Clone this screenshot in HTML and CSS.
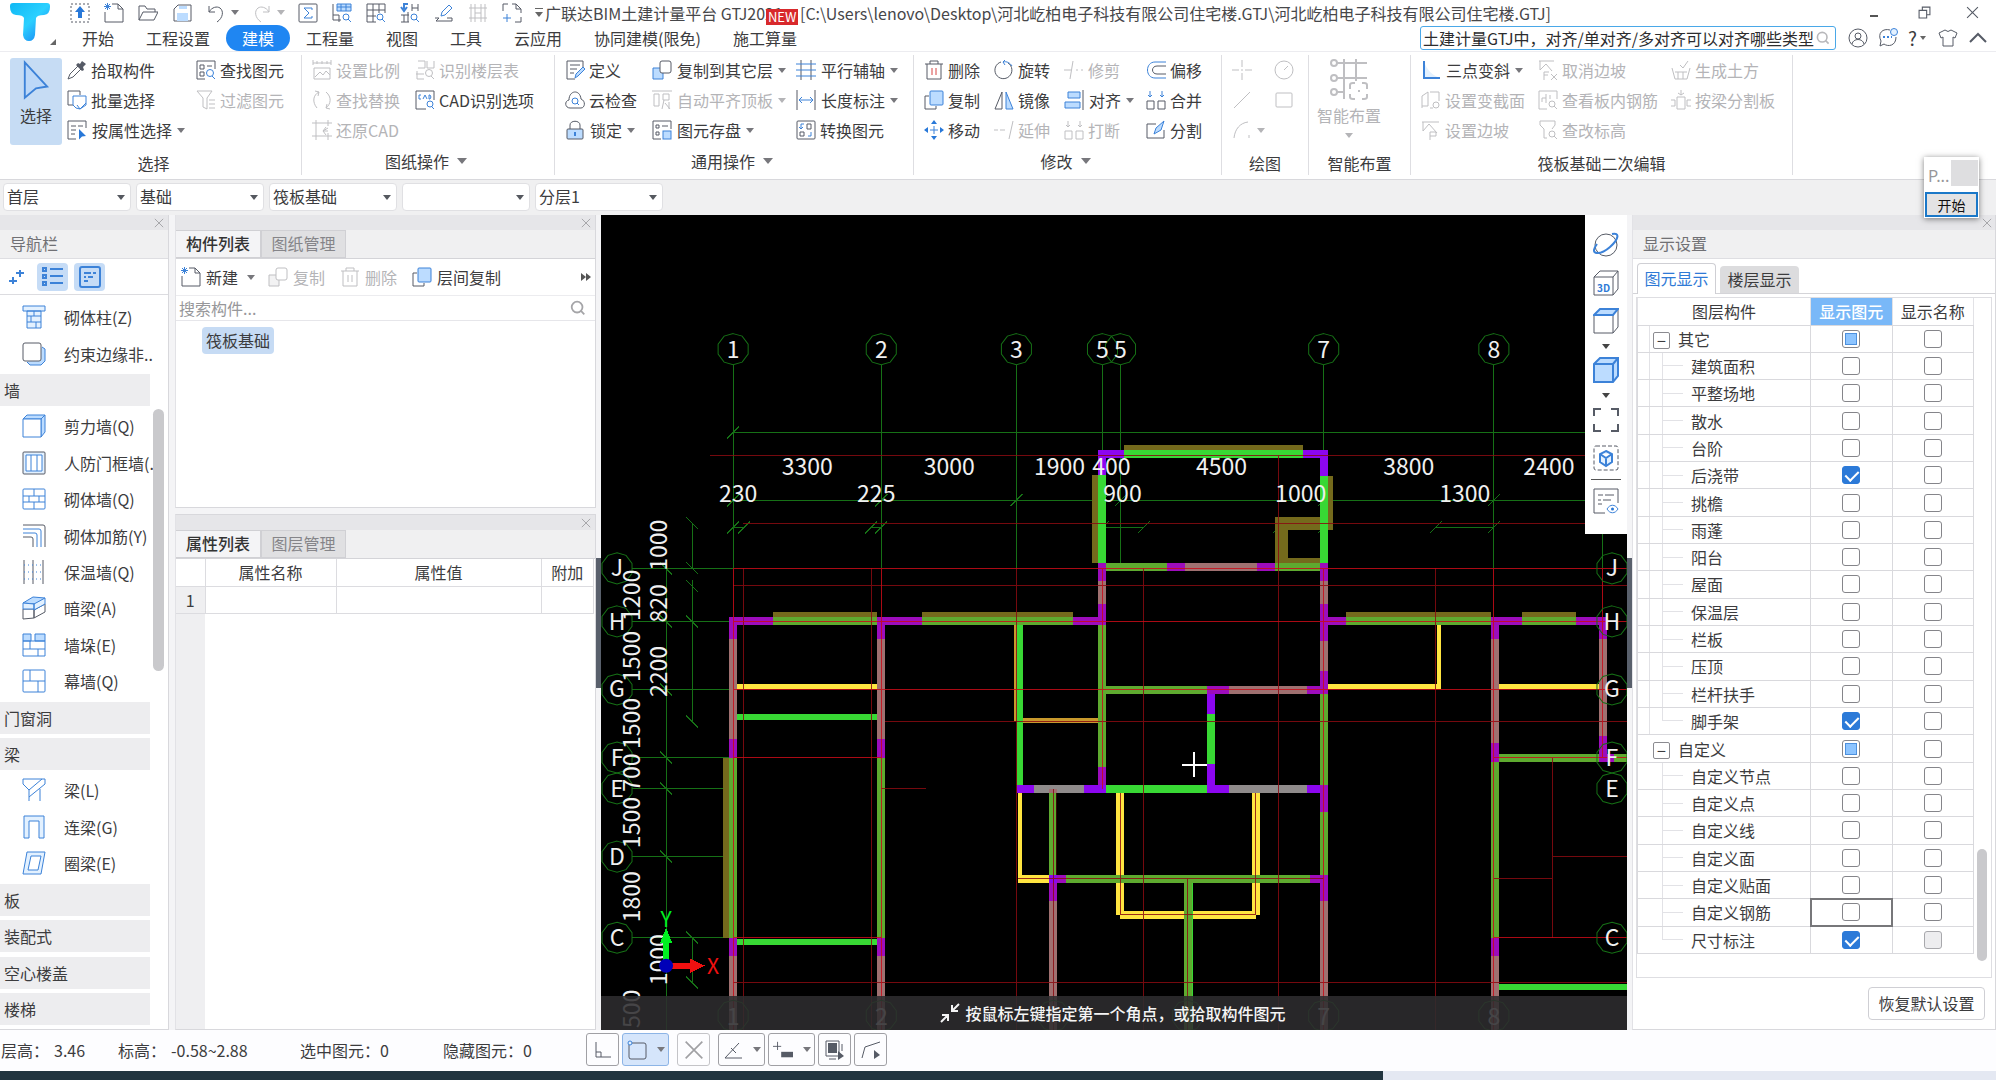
FILE: index.html
```html
<!DOCTYPE html>
<html lang="zh-CN">
<head>
<meta charset="utf-8">
<title>广联达BIM土建计量平台 GTJ2021</title>
<link rel="stylesheet" href="styles.css">
</head>
<body>
<svg class="defs" aria-hidden="true">
<defs>
<linearGradient id="logo" x1="0" y1="0" x2="1" y2="1"><stop offset="0" stop-color="#10b8f4"/><stop offset=".5" stop-color="#2bd0ff"/><stop offset="1" stop-color="#1673f0"/></linearGradient>
<symbol id="upbox" viewBox="0 0 20 20"><rect class="k" x="1" y="1" width="18" height="18" stroke-dasharray="2 2"/><path class="s" d="M10 3l5 6h-3v6H8V9H5z"/></symbol>
<symbol id="new" viewBox="0 0 20 20"><path class="k" d="M8 1h6l5 5v13H1V9M14 1v5h5"/><path class="a" d="M1 1l5 5M6 1L1 6M3.500 0v7M0 3.500h7"/></symbol>
<symbol id="open" viewBox="0 0 20 20"><path class="k" d="M1 17V3h6l2 3h8v3M1 17L5 9h15l-4 8z"/></symbol>
<symbol id="save" viewBox="0 0 20 20"><path class="k" d="M2 6l4-4h13v16H2z"/><path class="af" d="M5 10h11v8H5zM7 3h8v3H7z"/></symbol>
<symbol id="undo" viewBox="0 0 20 20"><path class="k" d="M3 3v6h6M3 9c3-5 8-6 11-4 4 3 3 10-3 14"/></symbol>
<symbol id="redo" viewBox="0 0 20 20"><path class="k" d="M17 3v6h-6M17 9C14 4 9 3 6 5c-4 3-3 10 3 14"/></symbol>
<symbol id="sum" viewBox="0 0 20 20"><rect class="k" x="1" y="1" width="18" height="18" rx="1"/><path class="a" d="M14 7V5H6l5 5-5 5h8v-2"/></symbol>
<symbol id="gridfind" viewBox="0 0 20 20"><path class="k" d="M1 1h18v9M1 1v18h9M1 7h18M1 13h9M7 1v18M13 1v9"/><circle class="a" cx="14" cy="14" r="3"/><path class="a" d="M16 16l3 3"/></symbol>
<symbol id="tablefind" viewBox="0 0 20 20"><path class="k" d="M1 1v16h8M1 12h6v7"/><path class="af" d="M5 1h14v7H5z"/><path class="a" d="M5 1h14v7H5zM5 4h14M9 1v7M14 1v7"/><circle class="a" cx="14" cy="14" r="3"/><path class="a" d="M16 16l3 3"/></symbol>
<symbol id="swapfind" viewBox="0 0 20 20"><path class="a" stroke-width="2" d="M8 1H4v5M1 4l3 4 3-4"/><path class="k" d="M12 1v7M18 1v7M12 5h6M1 12h8M4 12v7M1 19h8M8 9v10"/><circle class="a" cx="14" cy="14" r="3"/><path class="a" d="M16 16l3 3"/></symbol>
<symbol id="pen" viewBox="0 0 20 20"><path class="a" d="M7 13l1-4 7-7 3 3-7 7z"/><path class="k" d="M1 15h4l-3 3h16v-3h-5"/></symbol>
<symbol id="fence" viewBox="0 0 20 20"><path class="k" d="M3 1v18M7 1v18M13 1v18M17 1v18M1 5h18M1 15h18M7 10h6"/></symbol>
<symbol id="addpage" viewBox="0 0 20 20"><path class="k" d="M1 8V1h5M10 1h4l5 5v4M19 14v5h-6M14 1v5h5"/><path class="a" d="M5 11v8M1 15h8"/></symbol>
<symbol id="cursor" viewBox="0 0 30 44"><path class="af a" stroke-width="2" d="M3 3l24 26-12 2-12 10z"/></symbol>
<symbol id="dropper" viewBox="0 0 20 20"><path class="kf" d="M11 3l2 1 2-3 4 3-3 3 1 3-2 1-6-6z"/><path class="k" d="M11 6l-8 8-2 5 5-2 8-8"/></symbol>
<symbol id="batch" viewBox="0 0 20 20"><path class="k" d="M6 15H1V1h12v4"/><path class="a w" d="M6 6h13v9l-6 4-4-1-3-3z"/><path class="a" d="M10 15l3 4 6-6"/></symbol>
<symbol id="prop" viewBox="0 0 20 20"><path class="k" d="M9 19H1V1h18v7M4 6h5M11 6h5M4 10h5M4 14h4"/><path class="s" d="M12 9l7 7-4 .5-3 3z"/></symbol>
<symbol id="find" viewBox="0 0 20 20"><path class="k" d="M9 19H1V1h18v8M4 5h4v4H4zM4 12h4v4H4zM11 6h5"/><circle class="a" cx="14" cy="13" r="3.500"/><path class="a" d="M16 16l3 3"/></symbol>
<symbol id="filter" viewBox="0 0 20 20"><path class="k" d="M1 1h15l-5 7v11l-4-2V8zM13 10h6M13 14h6M13 18h6"/></symbol>
<symbol id="level" viewBox="0 0 20 20"><path class="k" d="M9 18H6V9L2 5V1h15v4l-3 4"/><circle class="k" cx="14" cy="14" r="3"/><path class="k" d="M16 16l3 3"/></symbol>
<symbol id="slab" viewBox="0 0 20 20"><path class="k" d="M9 19H1V1h18v8M8 4v9M4 8h4M4 8v4M12 5v4"/><circle class="k" cx="14" cy="14" r="3"/><path class="k" d="M16 16l3 3"/></symbol>
<symbol id="scale" viewBox="0 0 20 20"><path class="k" d="M1 0v5M5 1v3M10 1v3M15 1v3M19 0v5M1 3h18M2 8h16v11H2zM3 17l5-5 3 3 3-4 4 4"/></symbol>
<symbol id="floors" viewBox="0 0 20 20"><path class="k" d="M3 1h7v7H3M12 1v7h7V1M2 11v8h7M1 14h8"/><circle class="a" cx="14" cy="13" r="3.500"/><path class="a" d="M16 16l3 3"/></symbol>
<symbol id="cycle" viewBox="0 0 20 20"><path class="k" d="M5 18C0 12 1 5 7 2M7 2L3 1M7 2L6 6M14 2c6 5 5 12 0 16M14 18l4 1M14 18l1-4"/></symbol>
<symbol id="cad" viewBox="0 0 20 20"><path class="k" d="M11 19H1V1h18v9"/><path class="a" d="M6 5H4v4h2M8 9l2-4 2 4M14 5v4h1l1-2-1-2z"/><circle class="a" cx="15" cy="14" r="3"/><path class="a" d="M17 17l2 2"/></symbol>
<symbol id="restore" viewBox="0 0 20 20"><path class="k" d="M4 0v20M0 3h20M0 16h20M16 0v6M16 13v7M16 8l-5 3h5M11 11l3-4M11 11l3 4"/></symbol>
<symbol id="define" viewBox="0 0 20 20"><path class="k" d="M10 19H2V1h16v6M5 5h10M5 9h7M5 13h4"/><path class="a af" d="M10 18l1-4 7-7 2 2-7 7z"/></symbol>
<symbol id="cloud" viewBox="0 0 20 20"><path class="k" d="M5 18C0 18-1 11 4 10 4 0 15-1 16 9c5 2 4 9 0 9z"/><circle class="a" cx="10" cy="11" r="3"/><path class="a" d="M12 13l2 2"/></symbol>
<symbol id="lock" viewBox="0 0 20 20"><path class="k" d="M5 9V5c0-5 10-5 10 0v4"/><rect class="k af" x="2" y="9" width="16" height="10" rx="1"/><path class="a" stroke-width="2" d="M10 12v4"/></symbol>
<symbol id="copyto" viewBox="0 0 20 20"><path class="a af" d="M1 8h10v11H1z"/><rect class="k w" x="8" y="1" width="11" height="12" rx="2"/></symbol>
<symbol id="aligntop" viewBox="0 0 20 20"><path class="k" d="M0 1h20M2 4v12h5V4zM11 4h6v6h-6zM12 10l-2 9M13 13l5 6M17 12v7"/></symbol>
<symbol id="store" viewBox="0 0 20 20"><path class="k" d="M9 19H1V1h18v8M4 5h3v3H4zM10 6h6M4 12h3v3H4z"/><rect class="a af" x="11" y="11" width="8" height="8"/></symbol>
<symbol id="axes" viewBox="0 0 20 20"><path class="k" d="M5 0v20M15 0v20"/><path class="a" d="M0 4h20M0 10h20M0 16h20"/></symbol>
<symbol id="length" viewBox="0 0 20 20"><path class="k" d="M1 0v20M19 0v20"/><path class="a" d="M3 10h14M6 7l-3 3 3 3M14 7l3 3-3 3"/></symbol>
<symbol id="convert" viewBox="0 0 20 20"><rect class="k" x="1" y="1" width="18" height="18" rx="1"/><path class="k" d="M11 4h4v5h-4zM4 12h4v4H4z"/><path class="a" d="M8 4H5v5M12 16h3v-4M3 7l2 2 2-2"/></symbol>
<symbol id="trash" viewBox="0 0 20 20"><path class="k" d="M1 4h18M6 4V1h8v3M3 4v15h14V4"/><path class="r" d="M8 8v7M12 8v7"/></symbol>
<symbol id="rotate" viewBox="0 0 20 20"><path class="k" d="M14 3A8.500 8.500 0 1 1 7 2"/><path class="a" d="M9 2c4-1 7 1 9 4M11 0L9 2l2 3"/></symbol>
<symbol id="trim" viewBox="0 0 20 20"><path class="k" d="M0 10h7M9 1L6 19M12 10h2M17 10h2"/></symbol>
<symbol id="offset" viewBox="0 0 20 20"><path class="a" d="M20 2H9C-1 2-1 18 9 18h11"/><path class="k" d="M20 6h-9c-6 0-6 8 0 8h9"/></symbol>
<symbol id="copy" viewBox="0 0 20 20"><path class="k" d="M5 6H1v13h11v-3"/><rect class="a af" x="6" y="1" width="13" height="14" rx="1"/></symbol>
<symbol id="mirror" viewBox="0 0 20 20"><path class="k" d="M8 2v17H1z"/><path class="a af" d="M12 2v17h7z"/></symbol>
<symbol id="align" viewBox="0 0 20 20"><path class="k" d="M19 0v20"/><path class="a af" d="M4 2h12v6H4zM1 12h15v6H1z"/></symbol>
<symbol id="merge" viewBox="0 0 20 20"><path class="a" d="M4 1v6M2 5l2 2 2-2M16 1v6M14 5l2 2 2-2"/><path class="k" d="M1 11h7v8H1zM12 11h7v8h-7z"/></symbol>
<symbol id="move" viewBox="0 0 20 20"><path class="s" d="M10 0l3 4H7zM10 20l3-4H7zM0 10l4-3v6zM20 10l-4-3v6z"/><path class="a" d="M10 6v8M6 10h8"/></symbol>
<symbol id="extend" viewBox="0 0 20 20"><path class="k" d="M0 10h4M6 10h5M19 1l-4 18"/></symbol>
<symbol id="split" viewBox="0 0 20 20"><path class="k" d="M10 4H1v14h17v-8"/><path class="a af" d="M8 14l2-6 8-7-3 9z"/></symbol>
<symbol id="point" viewBox="0 0 20 20"><path class="k" d="M10 0v7M10 13v7M0 10h7M13 10h7M9 10h2"/></symbol>
<symbol id="circ" viewBox="0 0 20 20"><circle class="k" cx="10" cy="10" r="9"/><path class="k" d="M10 10l4-4"/></symbol>
<symbol id="line" viewBox="0 0 20 20"><path class="k" d="M2 18L18 2"/></symbol>
<symbol id="rect" viewBox="0 0 20 20"><rect class="k" x="2" y="3" width="16" height="14" rx="1"/></symbol>
<symbol id="arc" viewBox="0 0 20 20"><path class="k" d="M2 18C3 9 8 3 16 2M17 15v3"/></symbol>
<symbol id="smart" viewBox="0 0 40 42"><path class="k" stroke-width="2" d="M8 5h30M8 20h30M8 34h8M15 1v40M27 1v22M21 31v-4q0-2 3-2h2M33 25h2q3 0 3 2v4M38 36v3q0 2-3 2h-2M26 41h-2q-3 0-3-2v-3M30 32v2"/><circle class="k w" stroke-width="2" cx="5" cy="5" r="3"/><circle class="k w" stroke-width="2" cx="5" cy="20" r="3"/><circle class="k w" stroke-width="2" cx="5" cy="34" r="3"/></symbol>
<symbol id="slope" viewBox="0 0 20 20"><path class="af2" d="M3 2c4 9 8 13 16 16H3z"/><path class="a" stroke-width="2" d="M3 1v17h16"/></symbol>
<symbol id="section" viewBox="0 0 20 20"><path class="k" d="M1 18V6l6-4v14H1M9 2h9v9M9 18h3"/><circle class="k" cx="15" cy="15" r="3"/></symbol>
<symbol id="pit" viewBox="0 0 20 20"><path class="k" d="M1 2h17M2 2v9l6-7 8 9M9 12v8M9 12h6v4H9"/></symbol>
<symbol id="fx" viewBox="0 0 20 20"><path class="k" d="M1 1h15M2 1v9l6-6 6 7M6 12v8M6 12h5M6 15h4M13 14l6 6M19 14l-6 6"/></symbol>
<symbol id="excavate" viewBox="0 0 20 20"><path class="k" d="M1 8l3 11h12l3-11M4 12h12M7 12v7M12 12v7M9 5l3 3 5-7"/></symbol>
<symbol id="beamcut" viewBox="0 0 20 20"><path class="k" d="M6 7h8v12H6zM0 10h4v6H0M20 10h-4v6h4M10 0v5M7 3l3 2 3-2"/></symbol>
<symbol id="user" viewBox="0 0 20 20"><circle class="k" cx="10" cy="10" r="9"/><circle class="k" cx="10" cy="8" r="3"/><path class="k" d="M4 16c1-6 11-6 12 0"/></symbol>
<symbol id="chat" viewBox="0 0 20 20"><path class="k" d="M18 9c0 9-8 10-12 7l-4 2 1-5C-1 5 5 0 12 2"/><circle class="a af2" cx="16" cy="4" r="3.500"/><path class="a" stroke-width="2" d="M5 9h2M9 9h2M13 9h1"/></symbol>
<symbol id="shirt" viewBox="0 0 20 20"><path class="k" d="M7 2q3 3 6 0l6 3-2 5-2-1v9H5V9l-2 1-2-5z"/></symbol>
<symbol id="chev" viewBox="0 0 20 20"><path class="k" stroke-width="2" d="M2 14l8-8 8 8"/></symbol>
<symbol id="mag" viewBox="0 0 20 20"><circle class="k" stroke-width="2" cx="9" cy="9" r="6"/><path class="k" stroke-width="2" d="M13 13l4 4"/></symbol>
<symbol id="x" viewBox="0 0 12 12"><path class="k" d="M1 1l10 10M11 1L1 11"/></symbol>
<symbol id="winrest" viewBox="0 0 12 12"><path class="k" d="M1 4h7v7H1zM4 4V1h7v7H8"/></symbol>
<symbol id="stars" viewBox="0 0 20 20"><path class="a" stroke-width="2" d="M14 3v7M10 6h8M7 10v7M3 14h8"/></symbol>
<symbol id="list" viewBox="0 0 24 24"><path class="a" stroke-width="2" d="M2 3h3v3H2zM2 10h3v3H2zM2 17h3v3H2zM9 4h13M9 11h13M9 18h13"/></symbol>
<symbol id="card" viewBox="0 0 24 24"><rect class="a" stroke-width="2" x="2" y="2" width="20" height="20" rx="2"/><path class="a" stroke-width="2" d="M6 8h7M15 8h3M6 12h2M10 12h5M6 16h4"/></symbol>
<symbol id="n-col" viewBox="0 0 24 24"><path class="a af2" d="M1 1h22v5H1zM5 6h14v17H5z"/><path class="a" d="M5 11h14M5 17h14M12 6v5M9 11v6M14 17v6"/></symbol>
<symbol id="n-edge" viewBox="0 0 24 24"><path class="a af" d="M20 5l3 2v12l-4 4H8l-3-3"/><rect class="k w" x="1" y="1" width="18" height="18" rx="2"/></symbol>
<symbol id="n-shear" viewBox="0 0 24 24"><path class="a af" d="M1 5l4-4h18v17l-4 5V5z"/><path class="a" d="M19 5l4-4"/><path class="a w" d="M1 5h18v18H1z"/></symbol>
<symbol id="n-door" viewBox="0 0 24 24"><rect class="k af2" x="1" y="1" width="22" height="22" rx="1"/><path class="a w" d="M4 4h16v16H4zM9 4v16M15 4v16"/></symbol>
<symbol id="n-brick" viewBox="0 0 24 24"><rect class="a" x="1" y="2" width="22" height="20" rx="1"/><path class="a" d="M1 9h22M1 15h22M12 2v7M7 9v6M17 9v6M12 15v7"/></symbol>
<symbol id="n-rebar" viewBox="0 0 24 24"><path class="k" d="M1 1h20q2 0 2 2v20M1 13h8q2 0 2 2v8"/><path class="a" d="M1 5h16q2 0 2 2v16M1 9h12q2 0 2 2v12"/></symbol>
<symbol id="n-warm" viewBox="0 0 24 24"><path class="k" d="M2 0v24M11 0v24M21 0v24"/><path class="a" stroke-dasharray="1 3" d="M2 5h19M2 12h19M2 19h19"/></symbol>
<symbol id="n-beam" viewBox="0 0 24 24"><path class="a af" d="M1 7L11 1l12 1-9 6z"/><path class="k w" d="M1 13v10l11-1V13zM12 22l11-6V8l-11 6z"/><path class="a af2" d="M1 7v6h11V8zM12 8v6l11-6V2z"/></symbol>
<symbol id="n-pier" viewBox="0 0 24 24"><path class="a af" d="M1 1h8v7H1zM13 1h10v7H13z"/><path class="a" d="M1 8h22v15H1zM1 16h22M8 8v8M16 16v7"/></symbol>
<symbol id="n-curtain" viewBox="0 0 24 24"><rect class="a" x="1" y="1" width="22" height="22" rx="1"/><path class="a" d="M8 1v11M1 12h22M16 12v11"/></symbol>
<symbol id="n-l" viewBox="0 0 24 24"><path class="a" d="M1 1h22v5L7 19v4M1 1v5l6 6L20 1M7 12v7M18 11v12"/></symbol>
<symbol id="n-link" viewBox="0 0 24 24"><path class="a af2" d="M2 23V1h20v22h-5V6H7v17z"/></symbol>
<symbol id="n-ring" viewBox="0 0 24 24"><path class="a af2" d="M5 1h18l-4 22H1z"/><path class="a w" d="M9 5h10l-3 14H6z"/></symbol>
<symbol id="v-orbit" viewBox="0 0 26 26"><circle class="k" cx="13" cy="13" r="11"/><path class="a" stroke-width="2" d="M4 12c-9 12 4 11 13 3S27 0 19 2"/></symbol>
<symbol id="v-cube" viewBox="0 0 26 26"><path class="k" d="M1 7l6-6h18v18l-5 6H1zM1 7h19v18M20 7l5-6"/></symbol>
<symbol id="v-top" viewBox="0 0 26 26"><path class="af" d="M1 7l6-6h18l-5 6z"/><path class="k" d="M1 7v18h19l5-6V1M20 7v18"/><path class="a" stroke-width="2" d="M1 7l6-6h18l-5 6z"/></symbol>
<symbol id="v-solid" viewBox="0 0 26 26"><path class="a af" stroke-width="2" d="M1 7l6-6h18v18l-5 6H1zM1 7h19v18M20 7l5-6"/></symbol>
<symbol id="v-fit" viewBox="0 0 26 26"><path class="k" stroke-width="2" d="M1 9V2h7M18 2h7v7M25 17v7h-7M8 24H1v-7"/></symbol>
<symbol id="v-iso" viewBox="0 0 26 26"><rect class="k" x="1" y="1" width="24" height="24" rx="2" stroke-dasharray="4 2"/><path class="a af2" stroke-width="2" d="M13 6l6 3v8l-6 4-6-4V9zM7 9l6 4 6-4M13 13v8"/></symbol>
<symbol id="v-eye" viewBox="0 0 26 26"><path class="k" d="M12 25H1V1h24v14M5 7h5M12 7h9M5 12h3M10 12h8M5 16h4"/><path class="a" d="M14 21c3-5 8-5 11 0-3 5-8 5-11 0z"/><circle class="s" cx="19.500" cy="21" r="1.500"/></symbol>
<symbol id="s-ortho" viewBox="0 0 20 20"><path class="k" d="M3 2v15h15M3 12h5v5"/></symbol>
<symbol id="s-rect" viewBox="0 0 20 20"><rect class="k" x="2" y="3" width="17" height="16" rx="2"/><circle class="a af2" cx="3" cy="3" r="2"/></symbol>
<symbol id="s-angle" viewBox="0 0 20 20"><path class="k" d="M16 3L2 18h17M8 8l5 5"/></symbol>
<symbol id="s-plus" viewBox="0 0 22 20"><path class="k" d="M5 1v9M0 6h9"/><path class="kf" d="M9 12h13v6H9z"/></symbol>
<symbol id="s-layer" viewBox="0 0 20 20"><path class="k" d="M1 1h13v15H1zM17 4v7M4 19h7"/><path class="kf" d="M3 3h9v10H3zM13 11l6 5-6 4z"/></symbol>
<symbol id="s-poly" viewBox="0 0 20 20"><path class="k" d="M1 18L4 7l15-5"/><path class="kf" d="M13 10l6 5-6 4z"/></symbol>
<g id="bub"><path d="M0-15.500L9-13 15-5V5L9 13 0 15.500-9 13-15 5V-5L-9-13z"/></g>
</defs>
</svg>

<header class="top">
  <svg class="logo" viewBox="0 0 40 38" aria-hidden="true"><path fill="url(#logo)" d="M3 0h34q3 0 3 3v1q0 7-6 8-7 0-8 3l-1 17q-1 6-6 6t-6-6l1-17q-1-3-8-3-6-1-6-8V3q0-3 3-3z"/></svg>
  <i class="corner"></i>
  <div class="bars">
    <div class="title-row">
      <div class="quick">
        <button aria-label="导入"><svg><use href="#upbox"/></svg></button>
        <button aria-label="新建"><svg><use href="#new"/></svg></button>
        <button aria-label="打开"><svg><use href="#open"/></svg></button>
        <button aria-label="保存"><svg><use href="#save"/></svg></button>
        <button aria-label="撤销" class="drop"><svg><use href="#undo"/></svg></button>
        <button aria-label="恢复" class="drop off"><svg><use href="#redo"/></svg></button>
        <button aria-label="汇总计算"><svg><use href="#sum"/></svg></button>
        <button aria-label="查看工程量"><svg><use href="#tablefind"/></svg></button>
        <button aria-label="查看报表"><svg><use href="#gridfind"/></svg></button>
        <button aria-label="替换查找"><svg><use href="#swapfind"/></svg></button>
        <button aria-label="编辑"><svg><use href="#pen"/></svg></button>
        <button aria-label="栅格" class="off"><svg><use href="#fence"/></svg></button>
        <button aria-label="添加"><svg><use href="#addpage"/></svg></button>
      </div>
      <i class="more"></i>
      <h1><span class="app">广联达BIM土建计量平台 GTJ2021 -</span><span>[C:\Users\lenovo\Desktop\河北屹柏电子科技有限公司住宅楼.GTJ\河北屹柏电子科技有限公司住宅楼.GTJ]</span></h1>
      <div class="win">
        <button aria-label="最小化"><i class="min"></i></button>
        <button aria-label="还原"><svg><use href="#winrest"/></svg></button>
        <button aria-label="关闭"><svg><use href="#x"/></svg></button>
      </div>
    </div>
    <div class="menu-row">
      <nav class="menu">
        <a href="#">开始</a><a href="#">工程设置</a><a href="#" class="on">建模</a><a href="#">工程量</a><a href="#">视图</a><a href="#">工具</a><a href="#">云应用</a><a href="#">协同建模(限免)</a><a href="#">施工算量<b class="badge">NEW</b></a>
      </nav>
      <label class="ask"><input aria-label="搜索" value="土建计量GTJ中，对齐/单对齐/多对齐可以对齐哪些类型"><svg><use href="#mag"/></svg></label>
      <div class="tools">
        <button aria-label="用户"><svg><use href="#user"/></svg></button>
        <button aria-label="消息"><svg><use href="#chat"/></svg></button>
        <button class="help">?</button>
        <button aria-label="皮肤"><svg><use href="#shirt"/></svg></button>
        <button aria-label="收起"><svg><use href="#chev"/></svg></button>
      </div>
    </div>
  </div>
</header>

<section class="ribbon">
  <div class="group g1">
    <div class="cmds">
      <button class="big on"><svg><use href="#cursor"/></svg>选择</button>
      <button><svg><use href="#dropper"/></svg>拾取构件</button>
      <button><svg><use href="#find"/></svg>查找图元</button>
      <button><svg><use href="#batch"/></svg>批量选择</button>
      <button class="off"><svg><use href="#filter"/></svg>过滤图元</button>
      <button class="drop"><svg><use href="#prop"/></svg>按属性选择</button>
    </div>
    <h2>选择</h2>
  </div>
  <div class="group g2">
    <div class="cmds">
      <button class="off"><svg><use href="#scale"/></svg>设置比例</button>
      <button class="off"><svg><use href="#floors"/></svg>识别楼层表</button>
      <button class="off"><svg><use href="#cycle"/></svg>查找替换</button>
      <button><svg><use href="#cad"/></svg>CAD识别选项</button>
      <button class="off"><svg><use href="#restore"/></svg>还原CAD</button>
    </div>
    <h2 class="drop">图纸操作</h2>
  </div>
  <div class="group g3">
    <div class="cmds">
      <button><svg><use href="#define"/></svg>定义</button>
      <button class="drop"><svg><use href="#copyto"/></svg>复制到其它层</button>
      <button class="drop"><svg><use href="#axes"/></svg>平行辅轴</button>
      <button><svg><use href="#cloud"/></svg>云检查</button>
      <button class="drop off"><svg><use href="#aligntop"/></svg>自动平齐顶板</button>
      <button class="drop"><svg><use href="#length"/></svg>长度标注</button>
      <button class="drop"><svg><use href="#lock"/></svg>锁定</button>
      <button class="drop"><svg><use href="#store"/></svg>图元存盘</button>
      <button><svg><use href="#convert"/></svg>转换图元</button>
    </div>
    <h2 class="drop">通用操作</h2>
  </div>
  <div class="group g4">
    <div class="cmds">
      <button><svg><use href="#trash"/></svg>删除</button>
      <button><svg><use href="#rotate"/></svg>旋转</button>
      <button class="off"><svg><use href="#trim"/></svg>修剪</button>
      <button><svg><use href="#offset"/></svg>偏移</button>
      <button><svg><use href="#copy"/></svg>复制</button>
      <button><svg><use href="#mirror"/></svg>镜像</button>
      <button class="drop"><svg><use href="#align"/></svg>对齐</button>
      <button><svg><use href="#merge"/></svg>合并</button>
      <button><svg><use href="#move"/></svg>移动</button>
      <button class="off"><svg><use href="#extend"/></svg>延伸</button>
      <button class="off"><svg><use href="#merge"/></svg>打断</button>
      <button><svg><use href="#split"/></svg>分割</button>
    </div>
    <h2 class="drop">修改</h2>
  </div>
  <div class="group g5">
    <div class="cmds">
      <button class="off" aria-label="点"><svg><use href="#point"/></svg></button>
      <button class="off" aria-label="圆"><svg><use href="#circ"/></svg></button>
      <button class="off" aria-label="直线"><svg><use href="#line"/></svg></button>
      <button class="off" aria-label="矩形"><svg><use href="#rect"/></svg></button>
      <button class="off drop" aria-label="弧"><svg><use href="#arc"/></svg></button>
    </div>
    <h2>绘图</h2>
  </div>
  <div class="group g6">
    <div class="cmds">
      <button class="big off drop"><svg><use href="#smart"/></svg>智能布置</button>
    </div>
    <h2>智能布置</h2>
  </div>
  <div class="group g7">
    <div class="cmds">
      <button class="drop"><svg><use href="#slope"/></svg>三点变斜</button>
      <button class="off"><svg><use href="#fx"/></svg>取消边坡</button>
      <button class="off"><svg><use href="#excavate"/></svg>生成土方</button>
      <button class="off"><svg><use href="#section"/></svg>设置变截面</button>
      <button class="off"><svg><use href="#slab"/></svg>查看板内钢筋</button>
      <button class="off"><svg><use href="#beamcut"/></svg>按梁分割板</button>
      <button class="off"><svg><use href="#pit"/></svg>设置边坡</button>
      <button class="off"><svg><use href="#level"/></svg>查改标高</button>
    </div>
    <h2>筏板基础二次编辑</h2>
  </div>
</section>

<section class="combos">
  <label><select aria-label="楼层"><option>首层</option></select></label>
  <label><select aria-label="类别"><option>基础</option></select></label>
  <label><select aria-label="构件类型"><option>筏板基础</option></select></label>
  <label><select aria-label="构件"><option></option></select></label>
  <label><select aria-label="分层"><option>分层1</option></select></label>
</section>

<main>
  <aside class="panel nav">
    <div class="strip"><button aria-label="关闭"><svg><use href="#x"/></svg></button></div>
    <h3>导航栏</h3>
    <div class="nav-tools">
      <button aria-label="扩展"><svg><use href="#stars"/></svg></button>
      <button class="on" aria-label="列表"><svg><use href="#list"/></svg></button>
      <button class="on" aria-label="卡片"><svg><use href="#card"/></svg></button>
    </div>
    <div class="nav-body">
      <ul>
        <li><svg><use href="#n-col"/></svg>砌体柱(Z)</li>
        <li><svg><use href="#n-edge"/></svg>约束边缘非..</li>
        <li class="cat">墙</li>
        <li><svg><use href="#n-shear"/></svg>剪力墙(Q)</li>
        <li><svg><use href="#n-door"/></svg>人防门框墙(.</li>
        <li><svg><use href="#n-brick"/></svg>砌体墙(Q)</li>
        <li><svg><use href="#n-rebar"/></svg>砌体加筋(Y)</li>
        <li><svg><use href="#n-warm"/></svg>保温墙(Q)</li>
        <li><svg><use href="#n-beam"/></svg>暗梁(A)</li>
        <li><svg><use href="#n-pier"/></svg>墙垛(E)</li>
        <li><svg><use href="#n-curtain"/></svg>幕墙(Q)</li>
        <li class="cat">门窗洞</li>
        <li class="cat">梁</li>
        <li><svg><use href="#n-l"/></svg>梁(L)</li>
        <li><svg><use href="#n-link"/></svg>连梁(G)</li>
        <li><svg><use href="#n-ring"/></svg>圈梁(E)</li>
        <li class="cat">板</li>
        <li class="cat">装配式</li>
        <li class="cat">空心楼盖</li>
        <li class="cat">楼梯</li>
      </ul>
      <i class="thumb"></i>
    </div>
  </aside>

  <div class="middle">
    <section class="panel parts">
      <div class="strip"><button aria-label="关闭"><svg><use href="#x"/></svg></button></div>
      <div class="tabs"><button class="on">构件列表</button><button>图纸管理</button></div>
      <div class="part-tools">
        <button class="drop"><svg><use href="#new"/></svg>新建</button>
        <button class="off"><svg><use href="#copyto"/></svg>复制</button>
        <button class="off"><svg><use href="#trash"/></svg>删除</button>
        <button><svg><use href="#copy"/></svg>层间复制</button>
        <button class="next" aria-label="更多"><i></i><i></i></button>
      </div>
      <label class="search"><input placeholder="搜索构件..." aria-label="搜索构件"><svg><use href="#mag"/></svg></label>
      <div class="tree"><span>筏板基础</span></div>
    </section>
    <section class="panel props">
      <div class="strip"><button aria-label="关闭"><svg><use href="#x"/></svg></button></div>
      <div class="tabs"><button class="on">属性列表</button><button>图层管理</button></div>
      <table>
        <thead><tr><th></th><th>属性名称</th><th>属性值</th><th>附加</th></tr></thead>
        <tbody><tr><th>1</th><td></td><td></td><td></td></tr></tbody>
      </table>
      <div class="gutter"></div>
    </section>
  </div>
  <i class="grip"></i>

  <section class="canvas">
    <svg class="plan" viewBox="601 215 1025 815" preserveAspectRatio="xMinYMin slice">
      <g class="axis">
        <path d="M733 365V568M881 365V568M1016 365V568M1102 365V568M1120 365V568M1323 365V568M1493 365V568M1602 365V568"/>
        <path d="M733 432H1626M733 500H1626M733 527H744M871 527H881M1102 527H1143M1274 527H1323M1435 527H1493"/>
        <path d="M632 568H733M632 621H733M632 689H733M632 757H733M632 788H733M632 856H733M632 937H733"/>
        <path d="M666 568V1030M692 523V568M692 580V721M692 937V982"/>
        <path d="M727 438l12-12M727 506l12-12M875 506l12-12M1010 506l12-12M1096 506l12-12M1114 506l12-12M1317 506l12-12M1487 506l12-12M727 533l12-12M738 533l12-12M865 533l12-12M875 533l12-12M1096 533l12-12M1137 533l12-12M1272 533l12-12M1317 533l12-12M1429 533l12-12M1487 533l12-12"/>
        <path d="M660 562l12 12M660 615l12 12M660 683l12 12M660 751l12 12M660 782l12 12M660 850l12 12M686 517l12 12M686 562l12 12M686 580l12 12M686 615l12 12M686 715l12 12M686 931l12 12M686 976l12 12"/>
        <use href="#bub" x="733" y="349"/><use href="#bub" x="881" y="349"/><use href="#bub" x="1016" y="349"/><use href="#bub" x="1102" y="349"/><use href="#bub" x="1120" y="349"/><use href="#bub" x="1323" y="349"/><use href="#bub" x="1493" y="349"/>
        <use href="#bub" x="617" y="568"/><use href="#bub" x="617" y="621"/><use href="#bub" x="617" y="689"/><use href="#bub" x="617" y="757"/><use href="#bub" x="617" y="788"/><use href="#bub" x="617" y="856"/><use href="#bub" x="617" y="937"/>
      </g>
      <g class="olive">
        <path d="M773 612h104v5H773zM922 612h151v5H922zM1345 612h145v5h-145zM1521 612h54v5h-54zM1123 445h179v5h-179zM1092 475h6v88h-6zM1327 476h5v54h-5zM723 757h6v180h-6zM1274 517h45v13h-32v28h32v5h-45z"/>
      </g>
      <g class="green">
        <path d="M773 617h104v8H773zM922 617h151v8H922zM1345 617h145v8h-145zM1521 617h54v8h-54zM1123 450h179v8h-179zM1098 475h8v88h-8zM1319 476h8v87h-8zM1106 563h60v8h-60zM1274 563h45v8h-45z"/>
        <path d="M729 757h8v180h-8zM877 757h8v180h-8zM733 714h146v6H733zM737 938h140v6H737zM1017 625h6v159h-6zM1098 625h8v141h-8zM1106 686h100v8h-100zM1206 714h8v49h-8zM1319 693h8v91h-8zM1319 811h8v63h-8zM1106 784h100v8h-100z"/>
        <path d="M1490 761h8v176h-8zM1498 753h128v8h-128zM1494 983h132v6h-132z"/>
      </g>
      <g class="yellow">
        <path d="M733 684h148v5H733zM1327 684h111v5h-111zM1436 625h4v64h-4zM1493 684h109v5h-109zM1018 792h4v82h27v8h-31zM1115 792h8v122h-8zM1251 788h8v126h-8zM1119 910h136v8h-136z"/>
        <path class="gold" d="M1014 625h3v96h-3zM1023 718h75v5h-75z"/>
      </g>
      <g class="green">
        <path d="M1049 788h7v86h-7zM1066 874h243v8h-243zM1183 878h9v152h-9z"/>
      </g>
      <g class="grey">
        <path d="M729 639h8v99h-8zM877 639h8v99h-8zM729 955h8v75h-8zM877 955h8v75h-8zM1034 784h50v8h-50zM1228 784h78v8h-78zM1098 581h8v23h-8zM1319 581h8v23h-8zM1319 641h8v30h-8zM1319 900h8v130h-8zM1184 563h72v8h-72zM1228 686h78v8h-78zM1490 639h8v103h-8zM1490 955h8v75h-8zM1598 639h8v96h-8zM1049 900h8v130h-8z"/>
      </g>
      <g class="violet">
        <path d="M729 617h44v8h-36v14h-8zM877 617h45v8h-37v14h-8zM729 738h8v19h-8zM877 738h8v19h-8zM729 937h8v18h-8zM877 937h8v18h-8zM1073 617h25v-13h8v21h-33zM1098 450h25v8h-17v17h-8zM1302 450h25v26h-8v-18h-17zM1098 563h8v18h-8zM1319 563h8v18h-8zM1166 563h18v8h-18zM1256 563h18v8h-18z"/>
        <path d="M1319 604h8v13h18v8h-18v16h-8zM1306 686h13v-15h8v23h-21zM1206 686h22v8h-14v20h-8zM1206 763h8v21h14v8h-22zM1017 784h17v8h-17zM1084 784h14v-18h8v26h-22zM1306 784h21v27h-8v-19h-13zM1309 874h18v26h-8v-18h-10zM1049 874h17v8h-9v18h-8z"/>
        <path d="M1490 617h31v8h-23v14h-8zM1575 617h31v22h-8v-14h-23zM1490 742h8v19h-8zM1490 937h8v18h-8zM1598 735h8v18h7v8h-15z"/>
      </g>
      <path class="tint" d="M729 621H1106M1319 621H1606M1106 567H1319M1106 690H1319M1498 757H1626M733 625V1030M881 625V1030M1102 563V617M1102 625V784M1323 563V617M1323 625V1030M1494 625V1030M1602 625V753M1057 878H1319M1053 788V874M1053 882V1030M1187 882V1030"/>
      <g class="red">
        <path d="M710 455H1626M743 523H1626M733 585H1626M885 721H1626M733 982H1626M1278 455V1030M1143 568V1030M1435 568V1030M1016 568V1030M743 568V1030M871 568V1030M1552 757V937M1493 878H1552M1552 856H1626M1018 878H1323M1053 788V1030M1187 878V1030M881 788H926M1120 792V914M1255 792V914M1120 914H1255"/>
        <path class="hot" d="M733 568H1626M733 621H1626M733 689H1626M733 757H881M1493 757H1626M733 937H881M1493 937H1626M733 568V1030M881 568V1030M1102 568V788M1323 568V1030M1493 568V1030M1602 568V757"/>
      </g>
      <g class="axis">
        <use href="#bub" x="1611" y="568"/><use href="#bub" x="1611" y="621"/><use href="#bub" x="1611" y="689"/><use href="#bub" x="1611" y="757"/><use href="#bub" x="1611" y="788"/><use href="#bub" x="1611" y="937"/>
        <use href="#bub" x="733" y="1015"/><use href="#bub" x="881" y="1015"/><use href="#bub" x="1053" y="1015"/><use href="#bub" x="1187" y="1015"/><use href="#bub" x="1323" y="1015"/><use href="#bub" x="1493" y="1015"/>
      </g>
      <g class="dims">
        <text x="733" y="358">1</text><text x="881" y="358">2</text><text x="1016" y="358">3</text><text x="1102" y="358">5</text><text x="1120" y="358">5</text><text x="1323" y="358">7</text><text x="1493" y="358">8</text>
        <text x="807" y="475">3300</text><text x="949" y="475">3000</text><text x="1059" y="475">1900</text><text x="1111" y="475">400</text><text x="1221" y="475">4500</text><text x="1408" y="475">3800</text><text x="1548" y="475">2400</text>
        <text x="738" y="502">230</text><text x="876" y="502">225</text><text x="1122" y="502">900</text><text x="1300" y="502">1000</text><text x="1464" y="502">1300</text>
        <text x="617" y="576">J</text><text x="617" y="630">H</text><text x="617" y="697">G</text><text x="617" y="765">F</text><text x="617" y="796">E</text><text x="617" y="864">D</text><text x="617" y="945">C</text>
        <text x="1611" y="576">J</text><text x="1611" y="630">H</text><text x="1611" y="697">G</text><text x="1611" y="765">F</text><text x="1611" y="796">E</text><text x="1611" y="945">C</text>
        <text transform="translate(667 545) rotate(-90)">1000</text><text transform="translate(667 603) rotate(-90)">820</text><text transform="translate(667 671) rotate(-90)">2200</text><text transform="translate(667 959) rotate(-90)">1000</text>
        <text transform="translate(640 595) rotate(-90)">1200</text><text transform="translate(640 656) rotate(-90)">1500</text><text transform="translate(640 723) rotate(-90)">1500</text><text transform="translate(640 772) rotate(-90)">700</text><text transform="translate(640 822) rotate(-90)">1500</text><text transform="translate(640 896) rotate(-90)">1800</text><text transform="translate(640 1008) rotate(-90)">500</text>
        <text x="733" y="1024">1</text><text x="881" y="1024">2</text><text x="1323" y="1024">7</text><text x="1493" y="1024">8</text>
      </g>
      <path fill="#00f020" d="M663 960V942h-3l6-15 6 15h-3v18z"/>
      <path fill="#f01010" d="M671 962h19v-4l15 7-15 7v-4h-19z"/>
      <circle cx="666" cy="965" r="7" fill="#0000b8"/>
      <text class="ucs" x="666" y="926" fill="#00f020">Y</text><text class="ucs" x="713" y="973" fill="#f01010">X</text>
      <path d="M1193 751v25M1181 764h25" stroke="#fff" stroke-width="2"/>
    </svg>
    <div class="hint"><svg viewBox="0 0 20 20" aria-hidden="true"><path d="M19 1l-7 7M12 2v6h6M1 19l7-7M2 12h6v6"/></svg>按鼠标左键指定第一个角点，或拾取构件图元</div>
    <div class="views">
      <button aria-label="动态观察"><svg><use href="#v-orbit"/></svg></button>
      <button aria-label="三维"><svg><use href="#v-cube"/></svg><b>3D</b></button>
      <button aria-label="俯视" class="drop"><svg><use href="#v-top"/></svg></button>
      <button aria-label="实体" class="drop"><svg><use href="#v-solid"/></svg></button>
      <button aria-label="全屏"><svg><use href="#v-fit"/></svg></button>
      <button aria-label="局部三维"><svg><use href="#v-iso"/></svg></button>
      <hr>
      <button aria-label="显示设置"><svg><use href="#v-eye"/></svg></button>
    </div>
  </section>
  <i class="grip"></i>

  <aside class="panel display">
    <div class="strip"><button aria-label="关闭"><svg><use href="#x"/></svg></button></div>
    <h3>显示设置</h3>
    <div class="cards"><button class="on">图元显示</button><button>楼层显示</button></div>
    <div class="layers">
      <table>
        <thead><tr><th>图层构件</th><th class="sel">显示图元</th><th>显示名称</th></tr></thead>
        <tbody>
        <tr class="par"><td><button aria-label="收起">−</button>其它</td><td><input type="checkbox" class="part" aria-label="其它 图元"></td><td><input type="checkbox" aria-label="其它 名称"></td></tr>
        <tr><td>建筑面积</td><td><input type="checkbox" aria-label="建筑面积 图元"></td><td><input type="checkbox" aria-label="建筑面积 名称"></td></tr>
        <tr><td>平整场地</td><td><input type="checkbox" aria-label="平整场地 图元"></td><td><input type="checkbox" aria-label="平整场地 名称"></td></tr>
        <tr><td>散水</td><td><input type="checkbox" aria-label="散水 图元"></td><td><input type="checkbox" aria-label="散水 名称"></td></tr>
        <tr><td>台阶</td><td><input type="checkbox" aria-label="台阶 图元"></td><td><input type="checkbox" aria-label="台阶 名称"></td></tr>
        <tr><td>后浇带</td><td><input type="checkbox" checked aria-label="后浇带 图元"></td><td><input type="checkbox" aria-label="后浇带 名称"></td></tr>
        <tr><td>挑檐</td><td><input type="checkbox" aria-label="挑檐 图元"></td><td><input type="checkbox" aria-label="挑檐 名称"></td></tr>
        <tr><td>雨蓬</td><td><input type="checkbox" aria-label="雨蓬 图元"></td><td><input type="checkbox" aria-label="雨蓬 名称"></td></tr>
        <tr><td>阳台</td><td><input type="checkbox" aria-label="阳台 图元"></td><td><input type="checkbox" aria-label="阳台 名称"></td></tr>
        <tr><td>屋面</td><td><input type="checkbox" aria-label="屋面 图元"></td><td><input type="checkbox" aria-label="屋面 名称"></td></tr>
        <tr><td>保温层</td><td><input type="checkbox" aria-label="保温层 图元"></td><td><input type="checkbox" aria-label="保温层 名称"></td></tr>
        <tr><td>栏板</td><td><input type="checkbox" aria-label="栏板 图元"></td><td><input type="checkbox" aria-label="栏板 名称"></td></tr>
        <tr><td>压顶</td><td><input type="checkbox" aria-label="压顶 图元"></td><td><input type="checkbox" aria-label="压顶 名称"></td></tr>
        <tr><td>栏杆扶手</td><td><input type="checkbox" aria-label="栏杆扶手 图元"></td><td><input type="checkbox" aria-label="栏杆扶手 名称"></td></tr>
        <tr class="end"><td>脚手架</td><td><input type="checkbox" checked aria-label="脚手架 图元"></td><td><input type="checkbox" aria-label="脚手架 名称"></td></tr>
        </tbody>
        <tbody class="last">
        <tr class="par"><td><button aria-label="收起">−</button>自定义</td><td><input type="checkbox" class="part" aria-label="自定义 图元"></td><td><input type="checkbox" aria-label="自定义 名称"></td></tr>
        <tr><td>自定义节点</td><td><input type="checkbox" aria-label="自定义节点 图元"></td><td><input type="checkbox" aria-label="自定义节点 名称"></td></tr>
        <tr><td>自定义点</td><td><input type="checkbox" aria-label="自定义点 图元"></td><td><input type="checkbox" aria-label="自定义点 名称"></td></tr>
        <tr><td>自定义线</td><td><input type="checkbox" aria-label="自定义线 图元"></td><td><input type="checkbox" aria-label="自定义线 名称"></td></tr>
        <tr><td>自定义面</td><td><input type="checkbox" aria-label="自定义面 图元"></td><td><input type="checkbox" aria-label="自定义面 名称"></td></tr>
        <tr><td>自定义贴面</td><td><input type="checkbox" aria-label="自定义贴面 图元"></td><td><input type="checkbox" aria-label="自定义贴面 名称"></td></tr>
        <tr><td>自定义钢筋</td><td class="cur"><input type="checkbox" aria-label="自定义钢筋 图元"></td><td><input type="checkbox" aria-label="自定义钢筋 名称"></td></tr>
        <tr class="end"><td>尺寸标注</td><td><input type="checkbox" checked aria-label="尺寸标注 图元"></td><td><input type="checkbox" disabled aria-label="尺寸标注 名称"></td></tr>
        </tbody>
      </table>
      <i class="thumb"></i>
    </div>
    <button class="reset">恢复默认设置</button>
  </aside>
</main>

<footer class="status">
  <span class="s1">层高：<b>3.46</b></span>
  <span class="s2">标高：<b>-0.58~2.88</b></span>
  <span class="s3">选中图元：0</span>
  <span class="s4">隐藏图元：0</span>
  <div class="snap">
    <button aria-label="正交"><svg><use href="#s-ortho"/></svg></button>
    <button aria-label="矩形框选" class="drop on"><svg><use href="#s-rect"/></svg></button>
    <button aria-label="交点" class="off2"><svg><use href="#x"/></svg></button>
    <button aria-label="角度" class="drop"><svg><use href="#s-angle"/></svg></button>
    <button aria-label="偏移" class="drop"><svg><use href="#s-plus"/></svg></button>
    <button aria-label="图层选择"><svg><use href="#s-layer"/></svg></button>
    <button aria-label="折线选择"><svg><use href="#s-poly"/></svg></button>
  </div>
</footer>
<div class="taskbar"></div>

<div class="float">
  <div class="float-head">P...<i></i></div>
  <button>开始</button>
</div>
</body>
</html>
```
FILE: styles.css
```css
* { box-sizing: border-box; }
body {
  --k: #565b66; --a: #3c82d8; --f: #bcdcff; --f2: #e3f1ff; --s: #2878d8; --r: #d64545;
  margin: 0; height: 100vh; display: flex; flex-direction: column; overflow: hidden;
  position: relative; background: #fdfdff; color: #3c3c3e;
  font: 16px/20px "Noto Sans CJK SC", "Noto Sans", sans-serif;
}
h1, h2, h3, ul { margin: 0; padding: 0; font-size: 16px; line-height: 20px; font-weight: 400; }
button { font: inherit; color: inherit; background: none; border: 0; padding: 0; }
button, h1, h2, a, li, span { white-space: nowrap; }
input, select { font: inherit; color: inherit; }
svg { width: 20px; height: 20px; flex: none; fill: none; }
.defs { position: absolute; width: 0; height: 0; }
.k { stroke: var(--k); }
.a { stroke: var(--a); }
.r { stroke: var(--r); }
.s { fill: var(--s); }
.kf { fill: var(--k); }
.af { fill: var(--f); }
.af2 { fill: var(--f2); }
.w { fill: #fff; }
.off { --k: #bfbfc2; --a: #bfbfc2; --f: #f2f2f3; --f2: #f6f6f6; --s: #bfbfc2; --r: #bfbfc2; color: #b4b4b7; }
.drop::after { content: ""; border: 4px solid transparent; border-top: 5px solid #77777c; border-bottom: 0; flex: none; }
.off.drop::after { border-top-color: #b4b4b7; }

/* title and menu */
.top { display: flex; position: relative; height: 52px; background: #fff; border-bottom: 1px solid #ececf0; }
.logo { width: 40px; height: 38px; margin: 3px 0 0 10px; }
.corner { position: absolute; left: 50px; top: 39px; border: 3px solid #666; border-top-color: transparent; border-left-color: transparent; }
.bars { flex: 1; min-width: 0; padding-left: 14px; }
.title-row { display: flex; align-items: center; height: 25px; padding-left: 6px; }
.quick { display: flex; gap: 14px; }
.quick button { display: flex; align-items: center; }
.quick .drop { gap: 5px; margin-right: -1px; }
.more { width: 8px; height: 9px; margin: 0 2px 0 13px; border-top: 1px solid #666; position: relative; flex: none; }
.more::after { content: ""; position: absolute; left: 0; top: 3px; border: 4px solid transparent; border-top: 5px solid #666; border-bottom: 0; }
h1 { display: flex; flex: 1; color: #47474a; }
.app { width: 255px; }
.win { display: flex; gap: 35px; padding-right: 17px; }
.win button { display: flex; align-items: center; width: 13px; height: 20px; }
.win svg { width: 13px; height: 13px; }
.min { width: 8px; height: 2px; margin-top: 6px; background: #555; }
.menu-row { display: flex; align-items: center; height: 26px; }
.menu { display: flex; flex: 1; padding-left: 2px; }
.menu a { position: relative; padding: 0 16px; line-height: 26px; color: inherit; text-decoration: none; }
.menu .on { background: #1f86f2; color: #fff; border-radius: 13px; }
.badge { position: absolute; left: 49px; top: -16px; padding: 0 2px; line-height: 16px; font-size: 13px; font-weight: 400; background: #d8292c; color: #fff; }
.ask { display: flex; align-items: center; width: 416px; height: 24px; margin-right: 12px; padding: 0 4px 0 2px; border: 1px solid #4aa8e8; border-radius: 3px; background: #fff; }
.ask input { flex: 1; min-width: 0; height: 20px; border: 0; padding: 0; background: none; color: #2c2c2e; }
.ask svg { --k: #b8b8bb; width: 16px; height: 16px; }
.tools { display: flex; align-items: center; gap: 10px; padding-right: 8px; }
.tools button { display: flex; width: 20px; }
.help { font-size: 19px; align-items: center; gap: 3px; }
.help::after { content: ""; border: 3px solid transparent; border-top: 4px solid #666; border-bottom: 0; }

/* ribbon */
.ribbon { display: flex; height: 128px; background: #fff; border-bottom: 1px solid #d8d8dc; }
.group { display: flex; flex-direction: column; margin-top: 3px; height: 120px; border-right: 1px solid #dedee2; }
.cmds { display: grid; grid-auto-rows: 30px; padding: 0 0 0 10px; }
.cmds button { display: flex; align-items: center; gap: 4px; }
.cmds .drop { gap: 5px; }
.cmds .big { flex-direction: column; gap: 0; }
.group h2 { display: flex; align-items: center; justify-content: center; gap: 8px; margin-top: 8px; }
.group h2.drop { margin-top: 6px; padding-right: 4px; }
.group h2.drop::after { border-width: 6px 5px 0; }
.g1 { width: 302px; }
.g1 .cmds { grid-template-columns: 57px 129px 100px; }
.g1 .cmds .big { grid-row: 1 / 4; width: 52px; height: 87px; margin-top: 3px; background: #c6dcf4; border-radius: 3px; --f: #bcd8f8; }
.g1 .big svg { width: 28px; height: 44px; margin-bottom: 3px; }
.g1 .cmds button:nth-child(6) { grid-column: 2; }
.g1 h2 { padding-left: 6px; }
.g2 { width: 253px; }
.g2 .cmds { grid-template-columns: 103px 140px; }
.g3 { width: 359px; }
.g3 .cmds { grid-template-columns: 87px 144px 118px; }
.g4 { width: 308px; }
.g4 .cmds { grid-template-columns: 70px 70px 82px 70px; }
.g5 { width: 87px; }
.g5 .cmds { grid-template-columns: 42px 30px; }
.g6 { width: 102px; }
.g6 .cmds { grid-template-rows: 90px; grid-template-columns: 64px; padding: 0 0 0 8px; }
.g6 .big svg { width: 40px; height: 42px; margin: 3px 0 5px; }
.g6 .big::after { margin-top: 8px; }
.g7 { width: 382px; }
.g7 .cmds { grid-template-columns: 117px 133px 120px; }

/* selectors under the ribbon */
.combos { display: flex; gap: 5px; height: 35px; padding: 3px; background: #f0f0f1; }
.combos label { position: relative; width: 128px; height: 28px; }
.combos select { appearance: none; width: 100%; height: 28px; padding: 0 0 2px 3px; background: #fff; border: 1px solid #e0e0e3; border-radius: 4px; }
.combos label::after { content: ""; position: absolute; right: 6px; top: 12px; border: 4px solid transparent; border-top: 5px solid #55585f; border-bottom: 0; }

/* work area */
main { display: flex; flex: 1; min-height: 0; background: #f4f4f6; }
.panel { display: flex; flex-direction: column; background: #fff; border: 1px solid #d8d8dc; border-top: 0; border-left-color: #e2e2e6; }
.strip { display: flex; justify-content: flex-end; align-items: center; height: 15px; padding-right: 4px; background: #e6e6e9; }
.strip button { display: flex; --k: #9a9a9e; }
.strip svg { width: 10px; height: 10px; }
h3 { height: 29px; padding: 3px 10px; background: #f0f0f1; border-bottom: 1px solid #dedee2; color: #707074; }
.nav { width: 169px; margin-right: 6px; border-left: 0; }
.nav-tools { display: flex; gap: 6px; padding: 4px 0 3px 0; height: 36px; border-bottom: 1px solid #dcdce0; }
.nav-tools button { display: grid; place-items: center; width: 31px; height: 28px; }
.nav-tools button + button svg { width: 24px; height: 24px; }
.nav-tools .on { background: #c6dcf6; border-radius: 4px; }
.nav-body { position: relative; flex: 1; display: flex; padding: 4px 13px 2px 0; }
.nav ul { flex: 1; min-width: 0; display: flex; flex-direction: column; list-style: none; }
.nav li { flex: 1; display: flex; align-items: center; gap: 18px; padding-left: 22px; }
.nav li svg { width: 24px; height: 24px; }
.nav .cat { margin-right: 5px; padding-left: 4px; background: linear-gradient(#ededef, #ededef) 0 50% / 100% 32px no-repeat; }
.thumb { position: absolute; border-radius: 6px; background: #c9c9cc; }
.nav .thumb { right: 4px; top: 114px; width: 11px; height: 262px; }

.middle { display: flex; flex-direction: column; width: 421px; gap: 6px; }
.parts { flex: 0 0 293px; }
.props { flex: 1; border-top: 1px solid #d8d8dc; }
.tabs { display: flex; height: 29px; background: #f0f0f1; border-bottom: 1px solid #d4d4d8; }
.tabs button { width: 85px; padding-bottom: 2px; background: #e0e0e2; color: #858589; border: 1px solid #d0d0d4; }
.tabs .on { background: #f4f4f6; color: #333; font-weight: 500; border-left: 0; }
.part-tools { display: flex; align-items: center; gap: 16px; height: 37px; padding-left: 5px; border-bottom: 1px solid #ececef; }
.part-tools button { display: flex; align-items: center; gap: 5px; }
.part-tools .drop::after { margin-left: 4px; margin-right: -3px; }
.part-tools .off { margin-right: -1px; }
.part-tools .next { gap: 0; margin: 0 4px 0 auto; }
.next i { border: 4px solid transparent; border-left: 5px solid #555; border-right: 0; }
.search { display: flex; align-items: center; height: 25px; padding: 0 8px 0 3px; border-bottom: 1px solid #e6e6ea; }
.search input { flex: 1; border: 0; padding: 0; outline: 0; }
.search input::placeholder { color: #97979a; }
.search svg { width: 18px; height: 18px; --k: #a5a5a8; }
.tree { padding: 6px 26px; }
.tree span { display: inline-block; padding: 3px 4px 4px; background: #c6dbf4; border-radius: 4px; }
.props table { width: 418px; table-layout: fixed; border-collapse: collapse; }
.props th, .props td { height: 27px; padding: 0; font-weight: 400; border: 1px solid #dcdce0; border-top: 0; border-left: 0; }
.props th:first-child { width: 29px; }
.props th:nth-child(2) { width: 131px; }
.props th:nth-child(3) { width: 205px; }
.props tbody th { background: #efeff1; }
.gutter { flex: 1; width: 29px; background: #efeff1; }
.grip { width: 5px; align-self: flex-start; height: 130px; margin-top: 343px; background: #59606c; }

/* drawing */
.canvas { position: relative; flex: 1; min-width: 0; background: #000; }
.plan { position: absolute; inset: 0; width: 100%; height: 100%; }
.plan path { shape-rendering: crispEdges; }
.axis { stroke: #167016; }
.olive { fill: #746a1c; }
.green { fill: #38d834; }
.yellow { fill: #ffe540; }
.yellow .gold { fill: #c8992c; }
.grey { fill: #8f8b8b; }
.violet { fill: #8c06f0; }
.tint { stroke: #d02020; stroke-width: 8; stroke-opacity: .25; }
.red { stroke: #8a0a10; stroke-opacity: .85; }
.red .hot { stroke: #c80c18; }
.dims { fill: #f0f0f0; font-size: 23px; text-anchor: middle; }
.ucs { font-size: 21px; text-anchor: middle; }
.hint { position: absolute; left: 0; right: 0; bottom: 0; height: 34px; display: flex; align-items: center; justify-content: center; gap: 5px; background: rgba(46, 44, 47, .88); color: #f4f4f4; font-weight: 500; padding-right: 2px; }
.hint path { stroke: #f4f4f4; stroke-width: 2; }
.views { position: absolute; top: 0; right: 0; width: 42px; height: 319px; padding-top: 17px; display: flex; flex-direction: column; align-items: center; gap: 12px; background: #fff; }
.views button { position: relative; display: flex; flex-direction: column; align-items: center; gap: 10px; }
.views .drop + .drop { margin-top: -4px; }
.views .drop + button { margin-top: -3px; }
.views .drop::after { border-width: 5px 4px 0; border-top-color: #444; }
.views svg { width: 26px; height: 26px; }
.views b { position: absolute; left: 4px; top: 12px; font-size: 10px; line-height: 12px; color: #2f7ad6; }
.views hr { width: 30px; height: 1px; margin: -4px 0; border: 0; background: #555; }

/* display settings */
.display { position: relative; width: 364px; }
.display > .strip { padding-right: 3px; }
.cards { display: flex; align-items: flex-end; gap: 4px; height: 35px; padding-left: 4px; border-bottom: 1px solid #d4d4d8; }
.cards button { width: 79px; height: 27px; padding-bottom: 2px; background: #dcdcde; border-radius: 4px 4px 0 0; }
.cards .on { height: 31px; margin-bottom: -1px; padding-bottom: 3px; background: #fff; color: #2f7ad6; border: 1px solid #cfcfd4; border-bottom: 0; }
.layers { position: relative; flex: 1; min-height: 0; margin: 3px 3px 0 3px; border: 1px solid #dedee2; }
.layers table { width: 337px; height: 656px; table-layout: fixed; border-collapse: collapse; }
.layers th, .layers td { height: 27px; padding: 0; font-weight: 400; text-align: center; border: 1px solid #d9d9dd; border-top: 0; }
.layers th { border-color: transparent #e2e2e6 #d9d9dd; }
.layers th:first-child { width: 173px; }
.layers .sel { background: #79b8f8; color: #fff; font-weight: 500; }
.layers td:first-child { position: relative; text-align: left; padding-left: 53px; }
.layers .par td:first-child { padding-left: 15px; }
.layers tr:not(.par) td:first-child::before { content: ""; position: absolute; left: 24px; top: 0; bottom: 0; width: 20px; border-left: 1px solid #e2e2e6; background: linear-gradient(#e2e2e6, #e2e2e6) 0 50% / 20px 1px no-repeat; }
.layers .end td:first-child::before { bottom: 50% !important; background-position: 0 100% !important; }
.layers tbody:not(.last) td:first-child::after { content: ""; position: absolute; left: 11px; top: 0; bottom: 0; border-left: 1px solid #e2e2e6; }
.par button { width: 17px; height: 17px; margin-right: 8px; line-height: 13px; border: 1px solid #8b8b90; border-radius: 2px; vertical-align: -1px; }
.layers .cur { outline: 2px solid #77777a; outline-offset: -1px; }
.layers input { appearance: none; display: block; width: 18px; height: 18px; margin: 0 auto; border: 1px solid #85858a; border-radius: 3px; background: #fff; position: relative; }
.layers input:disabled { background: #ededef; border-color: #a8a8ac; }
.layers input:checked { background: #2c7ad8; border-color: #2c7ad8; }
.layers input:checked::after { content: ""; position: absolute; left: 5px; top: 1px; width: 6px; height: 11px; border: solid #fff; border-width: 0 2px 2px 0; transform: rotate(45deg); }
.layers .part::after { content: ""; position: absolute; inset: 2px; background: #8cc4ff; border: 1px solid #4d90dd; }
.layers .thumb { right: 4px; top: 551px; width: 10px; height: 112px; }
.reset { align-self: flex-end; width: 117px; height: 33px; margin: 9px 10px 9px 0; padding-bottom: 2px; border: 1px solid #cfcfd4; border-radius: 4px; }

/* status */
.status { display: flex; align-items: center; height: 41px; padding: 0 0 2px 1px; background: #fdfdff; }
.status b { margin-left: 5px; font-weight: 400; }
.s1 { width: 117px; }
.s2 { width: 182px; }
.s3 { width: 143px; }
.s4 { width: 143px; }
.snap { display: flex; }
.snap button { display: flex; align-items: center; justify-content: center; gap: 10px; width: 33px; height: 33px; margin-right: 3px; border: 1px solid #a0a0a5; border-radius: 3px; }
.snap .drop { width: 47px; }
.snap .on { background: #d5e5fb; border-color: #8cb4e6; margin-right: 8px; }
.snap .off2 { margin-right: 8px; border-color: #c4c4c8; --k: #a0a0a4; }
.taskbar { height: 9px; background: linear-gradient(90deg, #21343f 0 1383px, #e4e8f2 1383px); }

/* recorder window */
.float { position: absolute; right: 17px; top: 157px; width: 55px; height: 61px; padding: 1px; background: #fff; box-shadow: 0 1px 6px rgba(0, 0, 0, .5); }
.float-head { display: flex; justify-content: space-between; align-items: center; height: 34px; padding-left: 3px; color: #97979a; }
.float-head i { width: 27px; height: 26px; margin-top: -4px; background: #dedee0; }
.float button { width: 53px; height: 25px; background: #e3e3e4; border: 2px solid #1a78c8; color: #111; font-size: 14px; line-height: 20px; }
```
